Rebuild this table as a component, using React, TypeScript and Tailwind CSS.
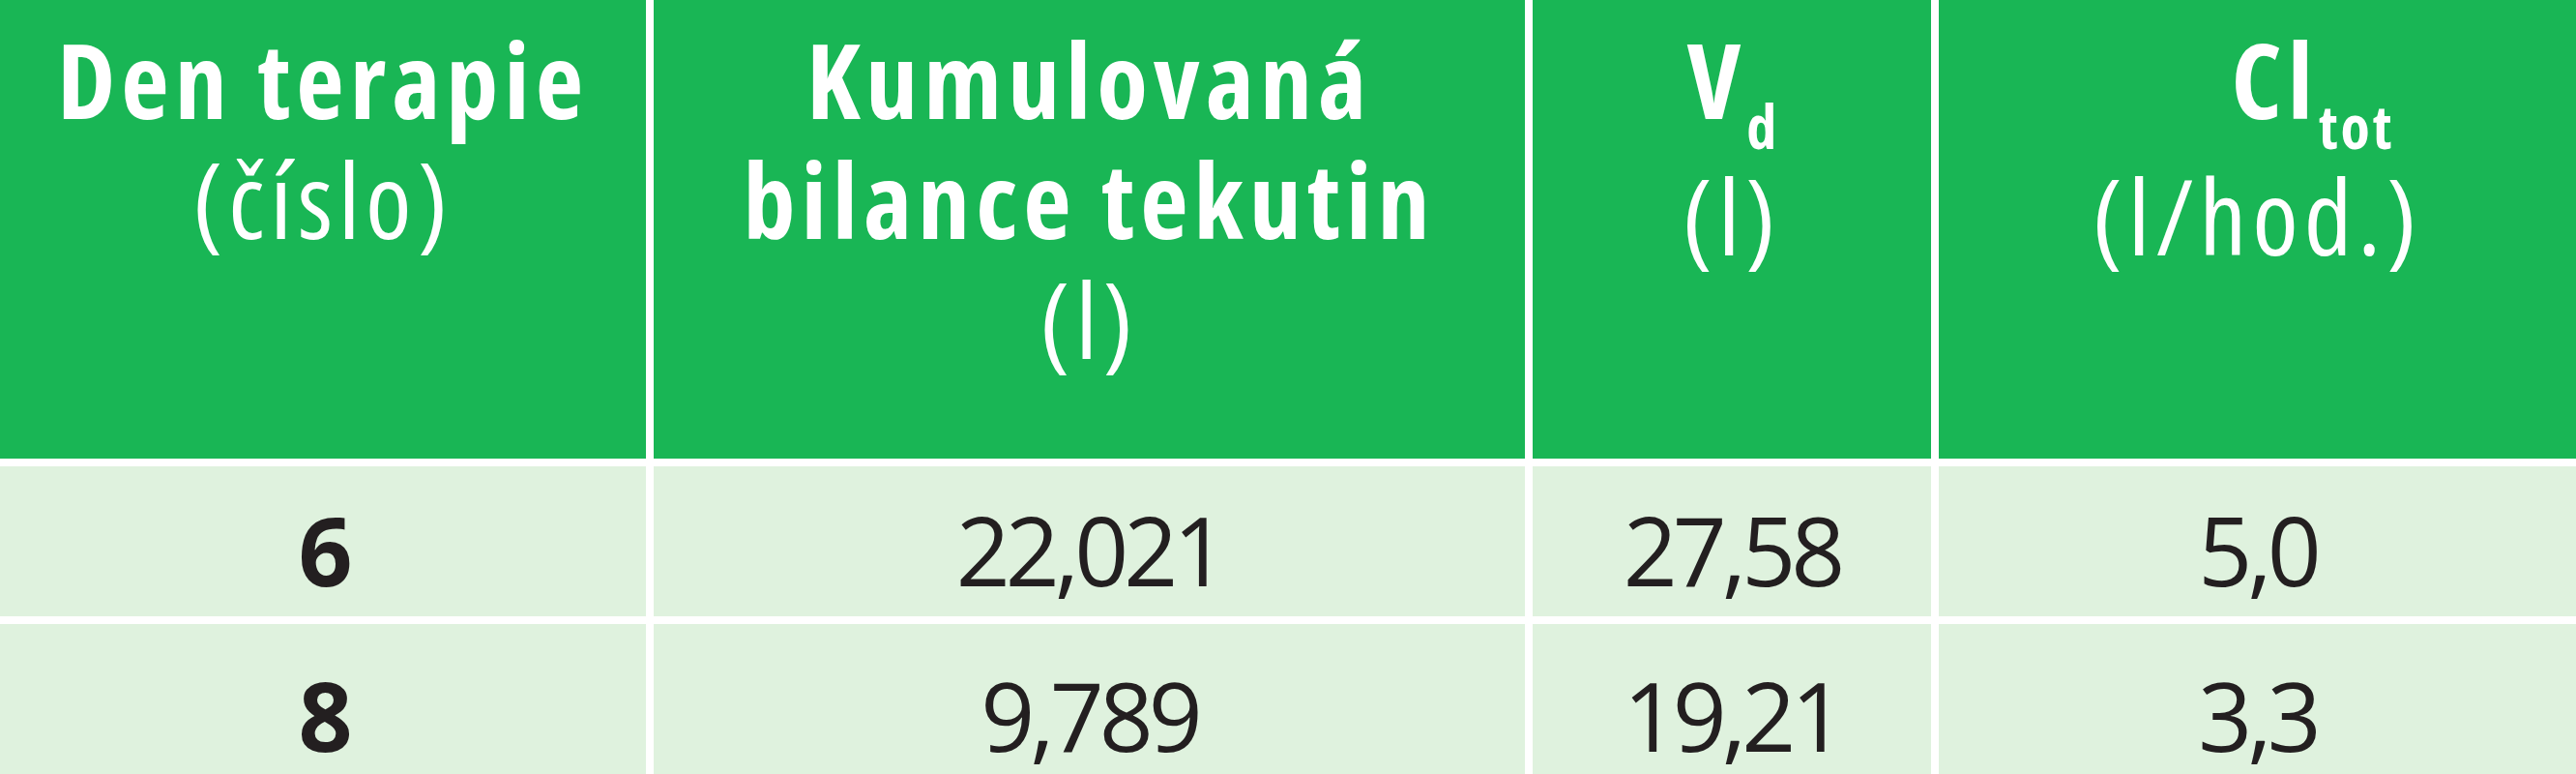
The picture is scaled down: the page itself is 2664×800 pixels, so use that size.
// Tabulka: den terapie, kumulovaná bilance tekutin, Vd a Cl_tot.
const font = "font-['Open_Sans',sans-serif]";

type Row = { day: string; balance: string; vd: string; cl: string; pad: string };

const rows: Row[] = [
  { day: "6", balance: "22,021", vd: "27,58", cl: "5,0", pad: "pt-[36px]" },
  { day: "8", balance: "9,789", vd: "19,21", cl: "3,3", pad: "pt-[44px]" },
];

function Head({ children }: { children: React.ReactNode }) {
  return (
    <div className="flex flex-col items-center bg-[#19b655] pt-[20px] text-center text-[108px] font-bold leading-[124px] tracking-[6px] text-white font-stretch-condensed">
      {children}
    </div>
  );
}

function Cell({ children, bold, pad }: { children: React.ReactNode; bold?: boolean; pad: string }) {
  return (
    <div
      className={`flex justify-center bg-[#dff2de] text-[98px] tracking-[-5px] text-[#231f20] ${pad} ${
        bold ? "font-bold" : "font-normal"
      }`}
    >
      <span className="leading-[100px]">{children}</span>
    </div>
  );
}

export default function App() {
  return (
    <div className={`h-[800px] w-[2664px] overflow-hidden bg-white ${font}`}>
      <div className="grid grid-cols-[668px_901px_412px_1fr] grid-rows-[474px_155px_155px] gap-x-[8px] gap-y-[8px]">
        <Head>
          <span>Den terapie</span>
          <span className="font-normal">(číslo)</span>
        </Head>
        <Head>
          <span>Kumulovaná</span>
          <span>bilance tekutin</span>
          <span className="font-normal">(l)</span>
        </Head>
        <Head>
          <span>
            V<span className="relative top-[31px] text-[62px] tracking-normal">d</span>
          </span>
          <span className="font-normal">(l)</span>
        </Head>
        <Head>
          <span className="pl-[115px]">
            Cl<span className="relative top-[31px] text-[62px] tracking-[3px]">tot</span>
          </span>
          <span className="font-normal">(l/hod.)</span>
        </Head>

        {rows.map((r) => (
          <div key={r.day} className="contents">
            <Cell bold pad={r.pad}>{r.day}</Cell>
            <Cell pad={r.pad}>{r.balance}</Cell>
            <Cell pad={r.pad}>{r.vd}</Cell>
            <Cell pad={r.pad}>{r.cl}</Cell>
          </div>
        ))}
      </div>
    </div>
  );
}
